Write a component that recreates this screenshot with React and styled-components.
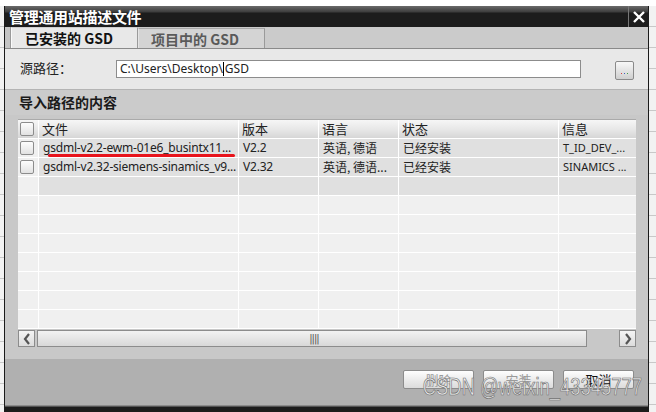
import styled, { createGlobalStyle } from "styled-components";

const Global = createGlobalStyle`
  html, body { margin: 0; padding: 0; }
  body {
    background: #ffffff;
    font-family: "Noto Sans", "Noto Sans CJK SC", sans-serif;
    overflow: hidden;
  }
`;

const CJK = `"Noto Sans CJK SC", "Noto Sans", sans-serif`;
const LATIN = `"Noto Sans", "Noto Sans CJK SC", sans-serif`;

const columns = [
  { key: "file", label: "文件", width: 200 },
  { key: "ver", label: "版本", width: 80 },
  { key: "lang", label: "语言", width: 80 },
  { key: "state", label: "状态", width: 160 },
  { key: "info", label: "信息", width: 78 },
];

const rows = [
  { file: "gsdml-v2.2-ewm-01e6_busintx11...", ver: "V2.2", lang: "英语, 德语", state: "已经安装", info: "T_ID_DEV_...", mark: true },
  { file: "gsdml-v2.32-siemens-sinamics_v9...", ver: "V2.32", lang: "英语, 德语...", state: "已经安装", info: "SINAMICS ..." },
  { shaded: true },
  {}, {}, {}, {}, {}, {}, {},
];

const App = () => {
  return (
    <>
      <Global />
      <Page>
        <SideStrip />
        <Dialog>
          <TitleBar>
            <Title>管理通用站描述文件</Title>
            <CloseBtn>
              <svg width="14" height="14" viewBox="0 0 14 14">
                <path d="M2 2 L12 12 M12 2 L2 12" stroke="#fff" strokeWidth="2.4" />
              </svg>
            </CloseBtn>
          </TitleBar>

          <TabStrip>
            <TabGap />
            <Tab $active>已安装的 GSD</Tab>
            <Tab>项目中的 GSD</Tab>
          </TabStrip>

          <PathRow>
            <PathLabel>源路径：</PathLabel>
            <PathInput>
              C:\Users\Desktop\<Caret />GSD
            </PathInput>
            <BrowseBtn>
              <Dot $c="#d04040" />
              <Dot $c="#4060c0" />
              <Dot $c="#40a040" />
            </BrowseBtn>
          </PathRow>

          <SectionHeader>导入路径的内容</SectionHeader>

          <TablePanel>
            <Table>
              <HeadRow>
                <CheckCell $head><Check /></CheckCell>
                {columns.map((c) => (
                  <HeadCell key={c.key} $w={c.width}>{c.label}</HeadCell>
                ))}
              </HeadRow>
              {rows.map((r, i) => (
                <Row key={i}>
                  <CheckCell>{r.file && <Check />}</CheckCell>
                  {columns.map((c) => (
                    <Cell
                      key={c.key}
                      $w={c.width}
                      $filled={!!r.file || r.shaded}
                      $cjk={c.key === "lang" || c.key === "state"}
                      $small={c.key === "info"}
                    >
                      {r[c.key]}
                      {c.key === "file" && r.mark && <RedMark />}
                    </Cell>
                  ))}
                </Row>
              ))}
              <ScrollBar>
                <ScrollBtn>
                  <svg width="8" height="12" viewBox="0 0 8 12">
                    <path d="M6 1 L2 6 L6 11" fill="none" stroke="#555" strokeWidth="2.2" />
                  </svg>
                </ScrollBtn>
                <Track>
                  <Grip>||||</Grip>
                </Track>
                <TrackGap />
                <ScrollBtn>
                  <svg width="8" height="12" viewBox="0 0 8 12">
                    <path d="M2 1 L6 6 L2 11" fill="none" stroke="#555" strokeWidth="2.2" />
                  </svg>
                </ScrollBtn>
              </ScrollBar>
            </Table>
          </TablePanel>

          <Footer>
            <Button $disabled>删除</Button>
            <Button $disabled>安装</Button>
            <Button>取消</Button>
            <Watermark>CSDN @weixin_43345777</Watermark>
          </Footer>
          <BottomBar />
        </Dialog>
        <SideStrip $right />
      </Page>
    </>
  );
};

export default App;

const Page = styled.div`
  display: flex;
  height: 412px;
  width: 656px;
  padding-top: 6px;
  box-sizing: border-box;
  background: linear-gradient(#ffffff 0, #ffffff 6px, #f0f0f0 6px);
`;

const SideStrip = styled.div`
  width: ${(p) => (p.$right ? 7 : 4)}px;
  flex-shrink: 0;
  background: repeating-linear-gradient(#f2f2f2 0, #f2f2f2 20px, #c8c8c8 20px, #c8c8c8 21px);
`;

const Dialog = styled.div`
  position: relative;
  width: 645px;
  display: flex;
  flex-direction: column;
  border-left: 1px solid #1a1a1a;
  border-right: 1px solid #1a1a1a;
  box-sizing: border-box;
  background: #c8c8c8;
`;

const TitleBar = styled.div`
  height: 21px;
  display: flex;
  align-items: center;
  background: linear-gradient(#6a6a6a 0, #3c3c3c 6px, #1c1c1c 7px, #1c1c1c 100%);
`;

const Title = styled.div`
  flex: 1;
  padding-left: 4px;
  color: #ffffff;
  font-family: ${CJK};
  font-weight: 700;
  font-size: 15px;
  line-height: 21px;
  letter-spacing: -0.3px;
`;

const CloseBtn = styled.div`
  width: 19px;
  height: 21px;
  display: flex;
  align-items: center;
  justify-content: center;
  border-left: 1px solid #777;
`;

const TabStrip = styled.div`
  height: 22px;
  display: flex;
  align-items: flex-end;
  background: #cbcbcb;
  border-bottom: 1px solid #8a8a8a;
  box-sizing: border-box;
`;

const TabGap = styled.div`
  width: 5px;
  height: 21px;
  background: #c4c4c4;
  border-right: 1px solid #9a9a9a;
`;

const Tab = styled.div`
  width: 127px;
  height: ${(p) => (p.$active ? 21 : 20)}px;
  box-sizing: border-box;
  padding-left: ${(p) => (p.$active ? 13 : 12)}px;
  font-family: ${CJK};
  font-weight: 700;
  font-size: 14px;
  line-height: 20px;
  color: ${(p) => (p.$active ? "#111" : "#5a5a5a")};
  background: ${(p) => (p.$active ? "#e8e8e8" : "#d4d4d4")};
  border-right: 1px solid #9a9a9a;
  border-left: 1px solid ${(p) => (p.$active ? "#fafafa" : "#e4e4e4")};
  border-top: 1px solid ${(p) => (p.$active ? "#cfcfcf" : "#a8a8a8")};
`;

const PathRow = styled.div`
  height: 41px;
  display: flex;
  align-items: center;
  background: #e8e8e8;
  padding-left: 15px;
  box-sizing: border-box;
  border-bottom: 1px solid #b4b4b4;
`;

const PathLabel = styled.div`
  width: 96px;
  font-family: ${CJK};
  font-size: 13px;
  color: #222;
  margin-top: -4px;
`;

const PathInput = styled.div`
  width: 465px;
  height: 18px;
  box-sizing: border-box;
  border: 1px solid #8c8c8c;
  background: #fff;
  padding-left: 3px;
  font-family: ${LATIN};
  font-size: 12px;
  line-height: 16px;
  color: #222;
  display: flex;
  align-items: center;
`;

const Caret = styled.span`
  display: inline-block;
  width: 1px;
  height: 14px;
  background: #000;
  margin-right: 1px;
`;

const BrowseBtn = styled.div`
  margin-left: 34px;
  width: 19px;
  height: 19px;
  box-sizing: border-box;
  border: 1px solid #8a8a8a;
  border-radius: 2px;
  background: linear-gradient(#f8f8f8, #e4e4e4 50%, #cfcfcf);
  display: flex;
  align-items: flex-end;
  justify-content: center;
  gap: 2px;
  padding-bottom: 5px;
  margin-top: 2px;
`;

const Dot = styled.span`
  width: 1px;
  height: 1px;
  background: ${(p) => p.$c};
`;

const SectionHeader = styled.div`
  height: 25px;
  background: #cbcbcb;
  padding-left: 14px;
  font-family: ${CJK};
  font-weight: 700;
  font-size: 14px;
  line-height: 25px;
  color: #1a1a1a;
`;

const TablePanel = styled.div`
  background: #c8c8c8;
  padding: 4px 12px 12px 13px;
`;

const Table = styled.div`
  width: 618px;
  display: flex;
  flex-direction: column;
  background: #c8c8c8;
  border-top: 1px solid #aaa;
`;

const HeadRow = styled.div`
  display: flex;
  height: 19px;
  box-sizing: border-box;
  background: linear-gradient(#f6f6f6, #e8e8e8 50%, #d6d6d6);
  border-bottom: 1px solid #ffffff;
`;

const HeadCell = styled.div`
  width: ${(p) => p.$w}px;
  box-sizing: border-box;
  padding-left: 3px;
  border-left: 1px solid #fff;
  font-family: ${CJK};
  font-size: 13px;
  line-height: 18px;
  color: #222;
`;

const Row = styled.div`
  display: flex;
  height: 19px;
  box-sizing: border-box;
  border-bottom: 1px solid #ffffff;
`;

const CheckCell = styled.div`
  width: 20px;
  box-sizing: border-box;
  display: flex;
  align-items: center;
  padding-left: 2px;
  background: ${(p) => (p.$head ? "transparent" : "#f0f0f0")};
`;

const Check = styled.div`
  width: 14px;
  height: 14px;
  box-sizing: border-box;
  border: 1px solid #8c8c8c;
  border-radius: 2px;
  background: linear-gradient(#fdfdfd, #e2e2e2);
`;

const Cell = styled.div`
  position: relative;
  width: ${(p) => p.$w}px;
  box-sizing: border-box;
  padding-left: 4px;
  border-left: 1px solid #fff;
  background: ${(p) => (p.$filled ? "#e0e0e0" : "#f0f0f0")};
  font-family: ${(p) => (p.$cjk ? CJK : LATIN)};
  font-size: ${(p) => (p.$small ? 11 : 12)}px;
  letter-spacing: ${(p) => (p.$cjk || p.$small ? 0 : -0.2)}px;
  line-height: 18px;
  color: #222;
  white-space: nowrap;
  overflow: hidden;
`;

const RedMark = styled.span`
  position: absolute;
  left: 9px;
  top: 15px;
  width: 187px;
  height: 3px;
  border-radius: 2px;
  background: #e8141c;
`;

const ScrollBar = styled.div`
  display: flex;
  height: 17px;
  margin-top: 1px;
  gap: 2px;
`;

const ScrollBtn = styled.div`
  width: 17px;
  height: 17px;
  box-sizing: border-box;
  border: 1px solid #8c8c8c;
  background: linear-gradient(#f4f4f4, #dcdcdc);
  display: flex;
  align-items: center;
  justify-content: center;
`;

const Track = styled.div`
  width: 550px;
  height: 17px;
  box-sizing: border-box;
  border: 1px solid #8c8c8c;
  background: linear-gradient(#f2f2f2, #d8d8d8);
  display: flex;
  align-items: center;
  justify-content: center;
`;

const Grip = styled.span`
  font-family: "DejaVu Sans", sans-serif;
  font-size: 10px;
  letter-spacing: -1px;
  color: #555;
  margin-left: 4px;
`;

const TrackGap = styled.div`
  flex: 1;
`;

const Footer = styled.div`
  position: relative;
  flex: 1;
  background: #b0b0b0;
  display: flex;
  justify-content: flex-end;
  align-items: flex-start;
  gap: 9px;
  padding: 11px 14px 0 0;
`;

const Button = styled.div`
  width: 71px;
  height: 19px;
  box-sizing: border-box;
  border: 1px solid #8c8c8c;
  border-radius: 2px;
  background: linear-gradient(#fefefe, #ececec 50%, #dcdcdc);
  text-align: center;
  font-family: ${CJK};
  font-size: 13px;
  line-height: 17px;
  color: ${(p) => (p.$disabled ? "#9a9a9a" : "#111")};
`;

const Watermark = styled.div`
  position: absolute;
  right: 6px;
  top: 15px;
  font-family: "Liberation Sans", sans-serif;
  font-size: 23px;
  line-height: 26px;
  color: rgba(242, 242, 242, 0.92);
  -webkit-text-stroke: 0.7px #6e6e6e;
  transform: scaleX(0.8);
  transform-origin: right center;
  white-space: nowrap;
  pointer-events: none;
`;

const BottomBar = styled.div`
  height: 7px;
  background: linear-gradient(#8a8a8a 0, #8a8a8a 1px, #1c1c1c 2px);
`;
